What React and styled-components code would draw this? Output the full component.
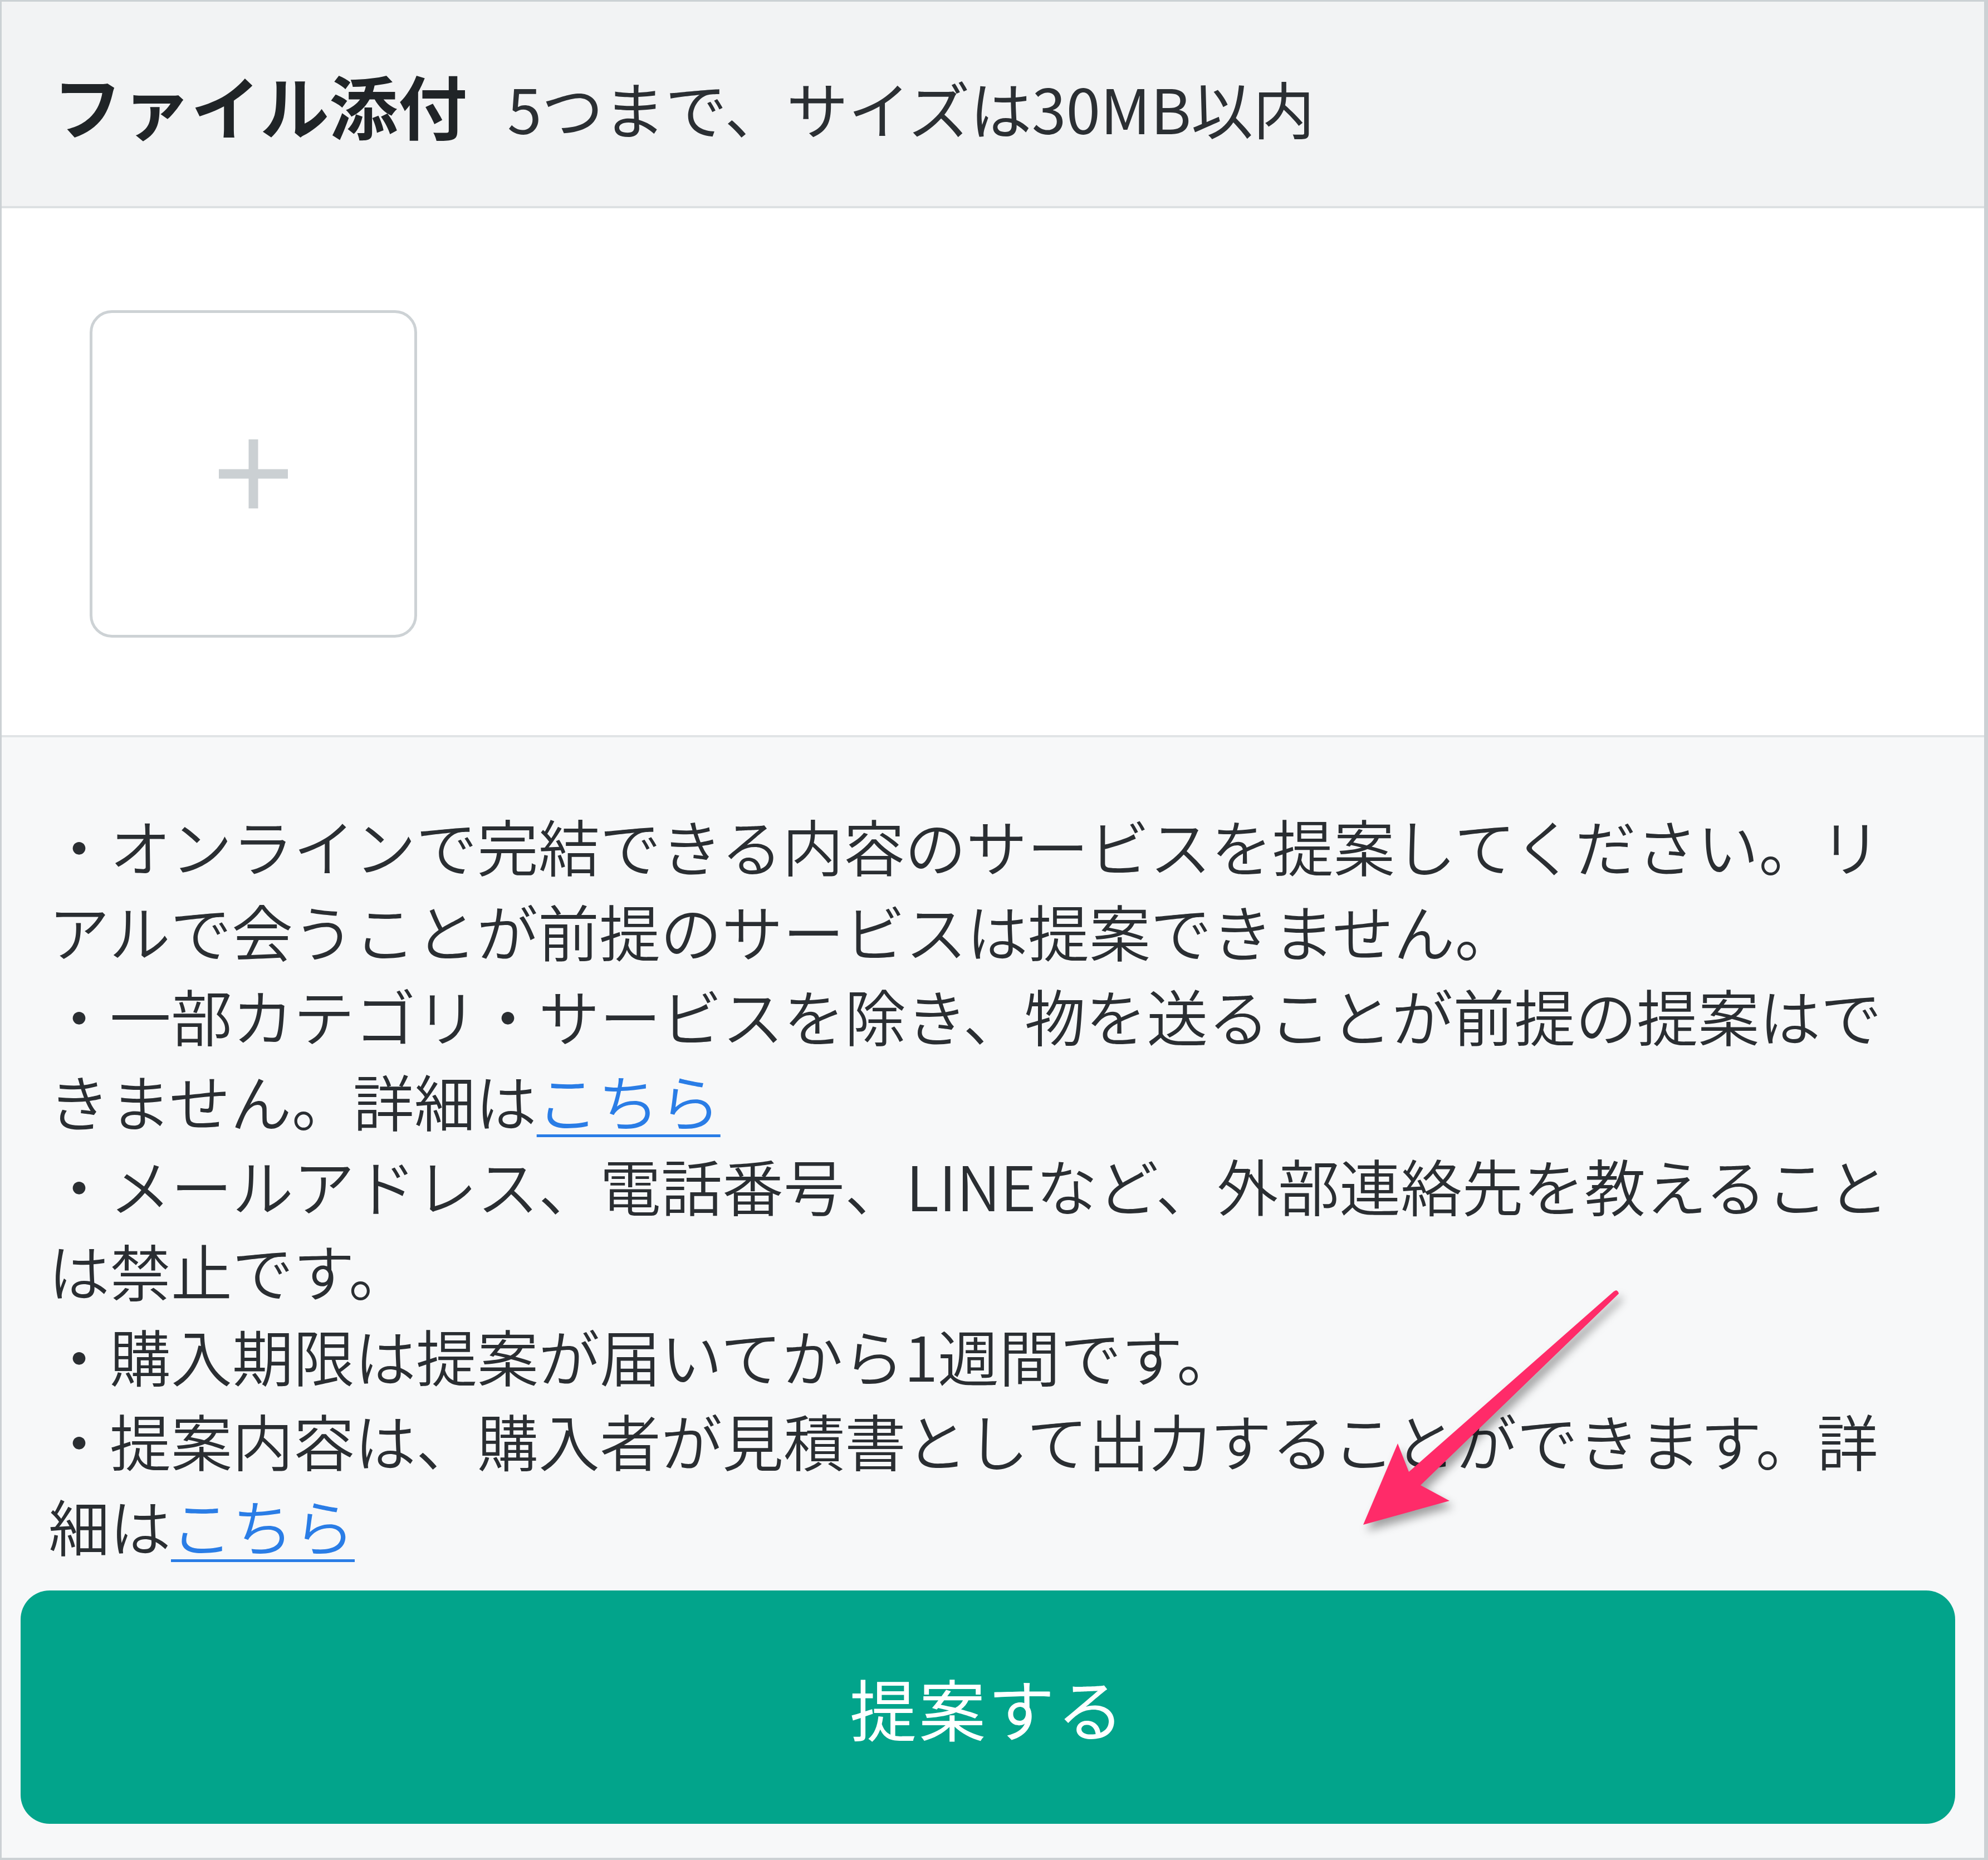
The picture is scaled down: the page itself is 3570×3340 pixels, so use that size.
import React from "react";
import styled, { createGlobalStyle } from "styled-components";

const GlobalStyle = createGlobalStyle`
  html, body {
    margin: 0;
    padding: 0;
    background: #ffffff;
  }
  body {
    font-family: "Noto Sans CJK JP", "Noto Sans", sans-serif;
  }
`;

const Frame = styled.div`
  position: relative;
  width: 3570px;
  height: 3340px;
  box-sizing: border-box;
  border: 3px solid #ccd1d4;
  border-right-width: 7px;
  border-bottom-width: 4px;
  display: flex;
  flex-direction: column;
  overflow: hidden;
  background: #f7f8f9;
`;

const Header = styled.header`
  flex: none;
  height: 367px;
  display: flex;
  align-items: center;
  padding-left: 92px;
  background: #f2f3f4;
  border-bottom: 4px solid #dde0e2;
`;

const HeaderText = styled.div`
  display: flex;
  align-items: baseline;
  gap: 72px;
`;

const Title = styled.h2`
  margin: 0;
  font-size: 124px;
  font-weight: 700;
  color: #202427;
`;

const Hint = styled.span`
  font-size: 111px;
  font-weight: 400;
  color: #2b2f33;
`;

const UploadArea = styled.section`
  flex: none;
  padding: 183px 0 175px 158px;
  background: #ffffff;
  border-bottom: 4px solid #e1e4e6;
`;

const AddTile = styled.button`
  width: 588px;
  height: 588px;
  box-sizing: border-box;
  border: 5px solid #cdd2d5;
  border-radius: 40px;
  background: #ffffff;
  display: flex;
  align-items: center;
  justify-content: center;
  padding: 0;
  cursor: pointer;
`;

const Notes = styled.div`
  flex: none;
  padding: 117px 140px 0 84px;
  font-size: 110px;
  font-weight: 350;
  line-height: 152.6px;
  color: #2a2e32;
`;

const Note = styled.p`
  margin: 0;
`;

const Link = styled.a`
  color: #2a7de6;
  text-decoration: underline;
  text-decoration-thickness: 5px;
  text-underline-offset: 14px;
`;

const SubmitButton = styled.button`
  flex: none;
  margin: 42px 52px 0 34px;
  height: 419px;
  border: none;
  border-radius: 52px;
  background: #02a48b;
  color: #ffffff;
  font-family: inherit;
  font-size: 120px;
  font-weight: 400;
  letter-spacing: 4px;
  cursor: pointer;
`;

const Pointer = styled.svg`
  position: absolute;
  left: 2377px;
  top: 2277px;
  width: 600px;
  height: 520px;
  filter: drop-shadow(7px 11px 8px rgba(0, 0, 0, 0.35));
  pointer-events: none;
`;

const PlusIcon = () => (
  <svg width="124" height="124" viewBox="0 0 124 124">
    <rect x="53.5" y="0" width="17" height="124" fill="#cbd0d3" />
    <rect x="0" y="53.5" width="124" height="17" fill="#cbd0d3" />
  </svg>
);

export default function App() {
  return (
    <>
      <GlobalStyle />
      <Frame>
        <Header>
          <HeaderText>
            <Title>ファイル添付</Title>
            <Hint>5つまで、サイズは30MB以内</Hint>
          </HeaderText>
        </Header>

        <UploadArea>
          <AddTile aria-label="ファイルを追加">
            <PlusIcon />
          </AddTile>
        </UploadArea>

        <Notes>
          <Note>
            ・オンラインで完結できる内容のサービスを提案してください。リアルで会うことが前提のサービスは提案できません。
          </Note>
          <Note>
            ・一部カテゴリ・サービスを除き、物を送ることが前提の提案はできません。詳細は
            <Link href="#">こちら</Link>
          </Note>
          <Note>
            ・メールアドレス、電話番号、LINEなど、外部連絡先を教えることは禁止です。
          </Note>
          <Note>・購入期限は提案が届いてから1週間です。</Note>
          <Note>
            ・提案内容は、購入者が見積書として出力することができます。詳細は
            <Link href="#">こちら</Link>
          </Note>
        </Notes>

        <SubmitButton>提案する</SubmitButton>

        <Pointer viewBox="0 0 600 520">
          <path
            d="M522 37 Q526 38 527 43 L171 387 L223 415 L68 458 L130 312 L150 363 L518 39 Z"
            fill="#ff2b69"
          />
        </Pointer>
      </Frame>
    </>
  );
}
